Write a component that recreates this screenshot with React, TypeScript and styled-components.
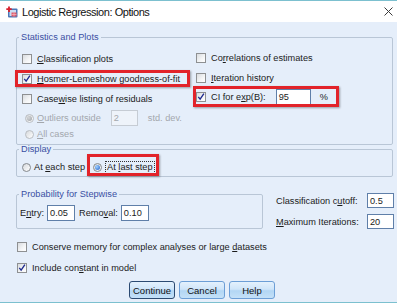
import React from 'react';
import styled, { createGlobalStyle } from 'styled-components';

const GlobalStyle = createGlobalStyle`
  html, body { margin: 0; padding: 0; background: #ffffff; }
  body {
    font-family: "Liberation Sans", Arial, sans-serif;
    font-size: 9.2px;
    color: #1b1b1b;
  }
  * { box-sizing: border-box; }
  u { text-underline-offset: 1px; }
`;

const Window = styled.div`
  width: 397px;
  height: 303px;
  display: flex;
  flex-direction: column;
  border-top: 1px solid #7cc0cf;
  border-bottom: 1px solid #7cc0cf;
  background: #e5eefa;
`;

const TitleBar = styled.div`
  height: 21px;
  flex: none;
  display: flex;
  align-items: center;
  padding: 0 0 0 6px;
  background: #ffffff;
`;

const Title = styled.span`
  margin-left: 4px;
  font-size: 11px;
  letter-spacing: -0.45px;
  color: #111;
`;

const CloseBtn = styled.span`
  margin-left: auto;
  width: 18px;
  display: flex;
  justify-content: center;
`;

const Body = styled.div`
  flex: 1;
  display: flex;
  flex-direction: column;
  padding: 10px 3px 0 16px;
`;

const Group = styled.fieldset<{ $mt?: number; $width?: number }>`
  margin: ${p => p.$mt ?? 0}px 1px 0 0;
  padding: 0;
  min-width: 0;
  width: ${p => (p.$width ? `${p.$width}px` : 'auto')};
  border: 1px solid #b9c6d6;
  border-radius: 2px;
`;

const Legend = styled.legend`
  margin-left: 2px;
  padding: 0 2px;
  line-height: 10px;
  color: #3a4fa3;
`;

const Inner = styled.div<{ $pad: string }>`
  padding: ${p => p.$pad};
`;

const Columns = styled.div`
  display: flex;
`;

const Column = styled.div<{ $width?: number }>`
  display: flex;
  flex-direction: column;
  width: ${p => (p.$width ? `${p.$width}px` : 'auto')};
`;

const Row = styled.div<{ $h?: number; $indent?: number; $mt?: number }>`
  display: flex;
  align-items: center;
  height: ${p => p.$h ?? 20}px;
  padding-left: ${p => p.$indent ?? 0}px;
  margin-top: ${p => p.$mt ?? 0}px;
  white-space: nowrap;
`;

const Label = styled.span<{ $disabled?: boolean; $ml?: number }>`
  color: ${p => (p.$disabled ? '#a3a7ad' : '#1b1b1b')};
  margin-left: ${p => p.$ml ?? 0}px;
`;

const Box = styled.span`
  width: 10px;
  height: 10px;
  flex: none;
  margin-right: 5px;
  border: 1px solid #8e9092;
  background: linear-gradient(135deg, #d9dcdf 0%, #f4f5f6 60%, #ffffff 100%);
  display: flex;
  align-items: center;
  justify-content: center;
`;

const RadioDot = styled.span<{ $disabled?: boolean }>`
  width: 9px;
  height: 9px;
  flex: none;
  margin-right: 3px;
  border-radius: 50%;
  border: 1px solid ${p => (p.$disabled ? '#b9bdc2' : '#85898d')};
  background: linear-gradient(135deg, #d6d9dc, #ffffff);
  display: flex;
  align-items: center;
  justify-content: center;
`;

const RadioFill = styled.span<{ $disabled?: boolean }>`
  width: 5px;
  height: 5px;
  border-radius: 50%;
  background: ${p =>
    p.$disabled
      ? 'radial-gradient(circle at 35% 35%, #d4d6d9, #9da1a6)'
      : 'radial-gradient(circle at 35% 35%, #9fd0ff, #1f5fc8)'};
`;

const Field = styled.div<{ $w: number; $h?: number; $disabled?: boolean; $ml?: number }>`
  width: ${p => p.$w}px;
  height: ${p => p.$h ?? 16}px;
  flex: none;
  margin-left: ${p => p.$ml ?? 0}px;
  padding-left: 2px;
  display: flex;
  align-items: center;
  background: ${p => (p.$disabled ? '#eef3fa' : '#ffffff')};
  border: 1px solid ${p => (p.$disabled ? '#c6ccd4' : '#5f7fa9')};
  color: ${p => (p.$disabled ? '#a3a7ad' : '#1b1b1b')};
`;

const Mark = styled.span<{ $t: number; $r: number; $b: number; $l: number; $ml?: number }>`
  position: relative;
  display: inline-flex;
  align-items: center;
  align-self: stretch;
  margin-left: ${p => p.$ml ?? 0}px;
  &::after {
    content: '';
    position: absolute;
    top: ${p => p.$t}px;
    right: ${p => p.$r}px;
    bottom: ${p => p.$b}px;
    left: ${p => p.$l}px;
    border: 3px solid #e2232a;
    box-shadow: 1px 1px 2px rgba(0, 0, 0, 0.35);
    pointer-events: none;
  }
`;

const Focus = styled.span`
  border: 1px dotted #333;
  padding: 0 1px;
  line-height: 11px;
`;

const MidRow = styled.div`
  display: flex;
  gap: 12px;
  margin-top: 12px;
`;

const Limits = styled.div`
  display: grid;
  grid-template-columns: 91px 27px;
  grid-auto-rows: 15px;
  row-gap: 6px;
  align-items: center;
  margin-top: 4px;
`;

const Buttons = styled.div`
  display: flex;
  gap: 4px;
  margin-top: 4px;
  padding-left: 113px;
`;

const Btn = styled.button<{ $default?: boolean }>`
  width: 46px;
  height: 18px;
  padding: 0;
  font: inherit;
  font-size: 9.5px;
  color: #111;
  border-radius: 3px;
  border: 1px solid ${p => (p.$default ? '#2b4a72' : '#6c9ed6')};
  background: linear-gradient(#e4f1fd 0%, #cfe5f9 45%, #b2d6f4 55%, #c4e1f8 100%);
`;

const Check = ({ checked }: { checked?: boolean }) => (
  <Box>
    {checked && (
      <svg width="10" height="10" viewBox="0 0 10 10">
        <path d="M1.6 4.8 L3.9 7.6 L8.6 0.8" fill="none" stroke="#1e2b8f" strokeWidth="1.7" />
      </svg>
    )}
  </Box>
);

const Radio = ({ on, disabled }: { on?: boolean; disabled?: boolean }) => (
  <RadioDot $disabled={disabled}>{on && <RadioFill $disabled={disabled} />}</RadioDot>
);

const AppIcon = () => (
  <svg width="12" height="12" viewBox="0 0 12 12">
    <rect x="2" y="2.5" width="9.5" height="9" rx="1" fill="#4b78b8" />
    <rect x="3.5" y="4" width="6.5" height="6" fill="#c9dcf2" />
    <rect x="5.5" y="6.5" width="5" height="4" fill="#e05a6a" />
    <path d="M5.5 8.5 H10.5 M8 6.5 V10.5" stroke="#f7c4cb" strokeWidth="0.6" />
    <path d="M3 0.5 V6 M0.3 3.2 H5.7" stroke="#d8202c" strokeWidth="1.8" />
  </svg>
);

const CloseIcon = () => (
  <svg width="9" height="9" viewBox="0 0 9 9">
    <path d="M0.5 0.5 L8.5 8.5 M8.5 0.5 L0.5 8.5" stroke="#3a3a3a" strokeWidth="1" />
  </svg>
);

export default function App() {
  return (
    <>
      <GlobalStyle />
      <Window>
        <TitleBar>
          <AppIcon />
          <Title>Logistic Regression: Options</Title>
          <CloseBtn>
            <CloseIcon />
          </CloseBtn>
        </TitleBar>
        <Body>
          <Group>
            <Legend>Statistics and Plots</Legend>
            <Inner $pad="7px 0 3px 5px">
              <Columns>
                <Column $width={174}>
                  <Row>
                    <Check />
                    <Label><u>C</u>lassification plots</Label>
                  </Row>
                  <Row>
                    <Mark $t={1} $r={-10} $b={2} $l={-7}>
                      <Check checked />
                      <Label><u>H</u>osmer-Lemeshow goodness-of-fit</Label>
                    </Mark>
                  </Row>
                  <Row>
                    <Check />
                    <Label>Case<u>w</u>ise listing of residuals</Label>
                  </Row>
                  <Row $h={18} $indent={3}>
                    <Radio on disabled />
                    <Label $disabled><u>O</u>utliers outside</Label>
                    <Field $w={27} $ml={10} $disabled>2</Field>
                    <Label $disabled $ml={10}>std. dev.</Label>
                  </Row>
                  <Row $h={14} $indent={3}>
                    <Radio disabled />
                    <Label $disabled><u>A</u>ll cases</Label>
                  </Row>
                </Column>
                <Column>
                  <Row $mt={-1}>
                    <Check />
                    <Label>Co<u>r</u>relations of estimates</Label>
                  </Row>
                  <Row $h={19}>
                    <Check />
                    <Label><u>I</u>teration history</Label>
                  </Row>
                  <Row>
                    <Mark $t={-1} $r={-11} $b={0} $l={-3}>
                      <Check checked />
                      <Label>CI for e<u>x</u>p(B):</Label>
                      <Field $w={35} $ml={10}>95</Field>
                      <Label $ml={9}>%</Label>
                    </Mark>
                  </Row>
                </Column>
              </Columns>
            </Inner>
          </Group>

          <Group $mt={-1}>
            <Legend>Display</Legend>
            <Inner $pad="4px 0 0 5px">
              <Row $h={18}>
                <Radio />
                <Label>At <u>e</u>ach step</Label>
                <Mark $t={-4} $r={-4} $b={0} $l={-6} $ml={8}>
                  <Radio on />
                  <Focus>At <u>l</u>ast step</Focus>
                </Mark>
              </Row>
            </Inner>
          </Group>

          <MidRow>
            <Group $width={248}>
              <Legend>Probability for Stepwise</Legend>
              <Inner $pad="5px 0 4px 3px">
                <Row $h={18}>
                  <Label>E<u>n</u>try:</Label>
                  <Field $w={28} $ml={3}>0.05</Field>
                  <Label $ml={4}>Remo<u>v</u>al:</Label>
                  <Field $w={28} $ml={3}>0.10</Field>
                </Row>
              </Inner>
            </Group>
            <Limits>
              <Label>Classification c<u>u</u>toff:</Label>
              <Field $w={27} $h={15}>0.5</Field>
              <Label><u>M</u>aximum Iterations:</Label>
              <Field $w={27} $h={15}>20</Field>
            </Limits>
          </MidRow>

          <Row $h={18} $indent={1} $mt={9}>
            <Check />
            <Label>Conserve memory for complex analyses or large <u>d</u>atasets</Label>
          </Row>
          <Row $h={18} $indent={1} $mt={3}>
            <Check checked />
            <Label>Include con<u>s</u>tant in model</Label>
          </Row>

          <Buttons>
            <Btn $default>Continue</Btn>
            <Btn>Cancel</Btn>
            <Btn>Help</Btn>
          </Buttons>
        </Body>
      </Window>
    </>
  );
}
